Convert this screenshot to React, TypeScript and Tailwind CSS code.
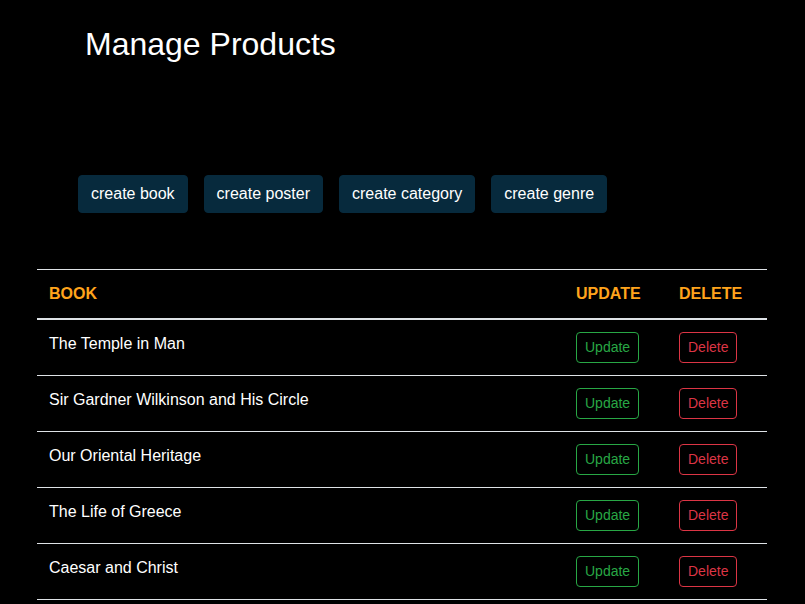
import React from 'react';

const books = [
  'The Temple in Man',
  'Sir Gardner Wilkinson and His Circle',
  'Our Oriental Heritage',
  'The Life of Greece',
  'Caesar and Christ',
];

const actions = ['create book', 'create poster', 'create category', 'create genre'];

export default function App() {
  return (
    <div className="min-h-screen bg-black text-white font-['Liberation_Sans',Arial,sans-serif]">
      <h1 className="pl-[85px] pt-[25px] text-[32px] leading-[38px] font-normal">Manage Products</h1>

      <div className="flex gap-4 pl-[78px] mt-[112px]">
        {actions.map((a) => (
          <button
            key={a}
            className="px-3 py-1.5 text-base leading-6 text-white bg-[#072a3d] border border-[#072a3d] rounded"
          >
            {a}
          </button>
        ))}
      </div>

      <table className="ml-[37px] mt-[56px] w-[730px] table-fixed border-collapse">
        <thead>
          <tr className="border-t border-[#dee2e6] border-b-2">
            <th className="w-[527px] p-3 text-left text-base leading-6 font-bold text-[#ffa41c]">BOOK</th>
            <th className="w-[103px] p-3 text-left text-base leading-6 font-bold text-[#ffa41c]">UPDATE</th>
            <th className="w-[100px] p-3 text-left text-base leading-6 font-bold text-[#ffa41c]">DELETE</th>
          </tr>
        </thead>
        <tbody>
          {books.map((b) => (
            <tr key={b} className="border-b border-[#dee2e6]">
              <td className="p-3 align-top text-base leading-6">{b}</td>
              <td className="p-3 align-top">
                <button className="px-2 py-1 text-sm leading-[21px] text-[#28a745] border border-[#28a745] rounded">
                  Update
                </button>
              </td>
              <td className="p-3 align-top">
                <button className="px-2 py-1 text-sm leading-[21px] text-[#dc3545] border border-[#dc3545] rounded">
                  Delete
                </button>
              </td>
            </tr>
          ))}
        </tbody>
      </table>
    </div>
  );
}
